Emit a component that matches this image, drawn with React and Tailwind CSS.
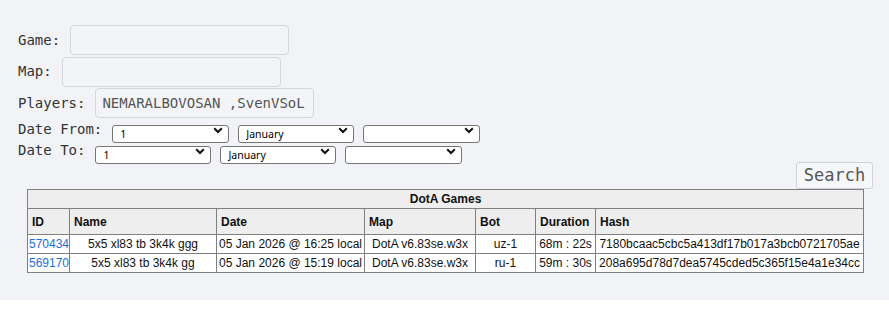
import { useState } from "react";

const mono = { fontFamily: '"DejaVu Sans Mono", "Liberation Mono", monospace' };

const games = [
  {
    id: "570434",
    name: "5x5 xl83 tb 3k4k ggg",
    date: "05 Jan 2026 @ 16:25 local",
    map: "DotA v6.83se.w3x",
    bot: "uz-1",
    duration: "68m : 22s",
    hash: "7180bcaac5cbc5a413df17b017a3bcb0721705ae",
  },
  {
    id: "569170",
    name: "5x5 xl83 tb 3k4k gg",
    date: "05 Jan 2026 @ 15:19 local",
    map: "DotA v6.83se.w3x",
    bot: "ru-1",
    duration: "59m : 30s",
    hash: "208a695d78d7dea5745cded5c365f15e4a1e34cc",
  },
];

const months = ["January", "February", "March", "April", "May", "June", "July", "August", "September", "October", "November", "December"];

const Select = ({ options, value, width }) => (
  <div className={`relative ${width} h-[18px]`}>
    <select
      defaultValue={value}
      className="appearance-none w-full h-full bg-white border border-[#767676] rounded-[3px] pl-[7px] text-[10.5px] text-black"
      style={{ fontFamily: '"Noto Sans", "Liberation Sans", sans-serif' }}
    >
      {options.map((o) => (
        <option key={o} value={o}>
          {o}
        </option>
      ))}
    </select>
    <svg
      className="absolute right-[6px] top-[6px] pointer-events-none"
      width="10"
      height="7"
      viewBox="0 0 10 7"
    >
      <path d="M1.2 1.2 L5 5 L8.8 1.2" fill="none" stroke="#111" strokeWidth="2" />
    </svg>
  </div>
);

const DateRow = ({ label, first }) => {
  const days = Array.from({ length: 31 }, (_, i) => String(i + 1));
  return (
    <div className="flex items-center gap-[10px] h-[21px]">
      <span className="text-[14px] text-[#333]">{label}</span>
      <div className="flex gap-[9px]">
        <Select options={days} value="1" width={first ? "w-[117px]" : "w-[116px]"} />
        <Select options={months} value="January" width="w-[116px]" />
        <Select options={[""]} value="" width={first ? "w-[117px]" : "w-[117px]"} />
      </div>
    </div>
  );
};

const TextRow = ({ label, value }) => {
  const [v, setV] = useState(value || "");
  return (
    <div className="flex items-center gap-[10px]">
      <span className="text-[14px] text-[#333]">{label}</span>
      <input
        value={v}
        onChange={(e) => setV(e.target.value)}
        className="w-[219px] h-[30px] bg-[#f3f4f7] border border-[#d4d6db] rounded-[4px] px-[6px] text-[14px] text-[#555] outline-none"
        style={mono}
      />
    </div>
  );
};

export default function App() {
  return (
    <div className="bg-[#f2f3f7] h-[300px] w-full" style={mono}>
      <div className="pt-[25px] pl-[18px] flex flex-col gap-[1.5px]">
        <TextRow label="Game:" />
        <TextRow label="Map:" />
        <TextRow label="Players:" value="NEMARALBOVOSAN ,SvenVSoL" />
      </div>
      <div className="pl-[18px] pt-[1px]">
        <DateRow label="Date From:" first />
        <DateRow label="Date To:" />
      </div>
      <div className="flex justify-end pr-[16px] pt-[1px]">
        <button className="w-[77px] h-[27px] bg-[#f6f7f9] border border-[#cfd1d6] rounded-[3px] text-[17px] text-[#555] leading-none">
          Search
        </button>
      </div>
      <div className="px-[27px]">
        <table
          className="w-[836px] table-fixed border-collapse text-[12px] text-[#111]"
          style={{ fontFamily: '"Liberation Sans", Arial, sans-serif' }}
        >
          <colgroup>
            <col className="w-[42px]" />
            <col className="w-[147px]" />
            <col className="w-[148px]" />
            <col className="w-[111px]" />
            <col className="w-[60px]" />
            <col className="w-[60px]" />
            <col className="w-[268px]" />
          </colgroup>
          <thead>
            <tr className="h-[19px] bg-[#eeeeee]">
              <th colSpan={7} className="border border-[#808080] font-bold p-0">
                DotA Games
              </th>
            </tr>
            <tr className="h-[26px] bg-[#eeeeee]">
              {["ID", "Name", "Date", "Map", "Bot", "Duration", "Hash"].map((h) => (
                <th key={h} className="border border-[#808080] text-left font-bold px-[4px]">
                  {h}
                </th>
              ))}
            </tr>
          </thead>
          <tbody>
            {games.map((g) => (
              <tr key={g.id} className="h-[19px] bg-white">
                <td className="border border-[#808080] px-[1px] whitespace-nowrap">
                  <a href="#" className="text-[#1a6fdb]">
                    {g.id}
                  </a>
                </td>
                <td className="border border-[#808080] px-[1px] text-center whitespace-nowrap">{g.name}</td>
                <td className="border border-[#808080] px-[1px] text-center whitespace-nowrap">{g.date}</td>
                <td className="border border-[#808080] px-[1px] text-center whitespace-nowrap">{g.map}</td>
                <td className="border border-[#808080] px-[1px] text-center whitespace-nowrap">{g.bot}</td>
                <td className="border border-[#808080] px-[1px] text-center whitespace-nowrap">{g.duration}</td>
                <td className="border border-[#808080] px-[1px] text-center whitespace-nowrap">{g.hash}</td>
              </tr>
            ))}
          </tbody>
        </table>
      </div>
    </div>
  );
}
